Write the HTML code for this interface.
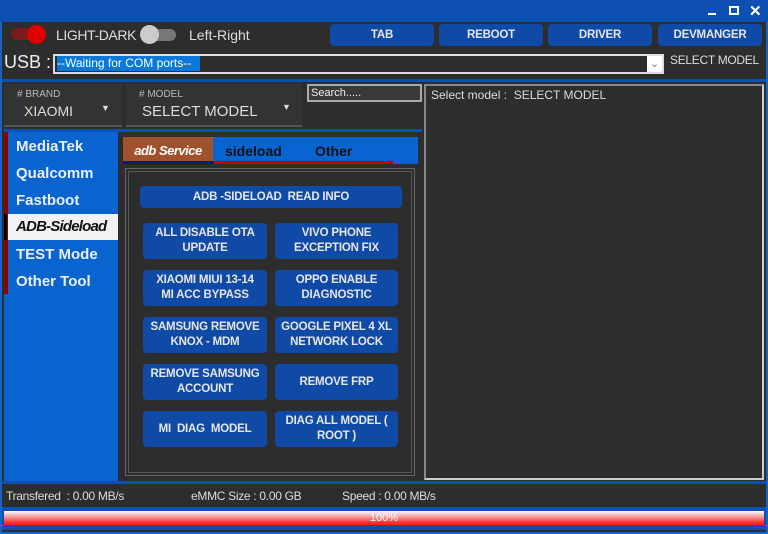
<!DOCTYPE html>
<html><head><style>
*{margin:0;padding:0;box-sizing:border-box}
body{width:768px;height:534px;background:#1565c0;font-family:"Liberation Sans",sans-serif;position:relative;overflow:hidden}
.a{position:absolute}
.dark{background:#2d2d2d}
.btn{position:absolute;background:#0f4aa6;color:#e6e6e6;font-weight:bold;font-size:11.5px;text-align:center;border-radius:4px;display:flex;align-items:center;justify-content:center;line-height:15px;letter-spacing:-0.2px}
.side{position:absolute;left:16px;color:#e8f0ff;font-size:15px;font-weight:bold}
</style></head><body>
<div class="a" style="left:0;top:0;width:768px;height:22px;background:#0d4fb3"></div>
<div class="a" style="left:708px;top:13px;width:8px;height:2px;background:#fff"></div>
<div class="a" style="left:729px;top:6px;width:10px;height:9px;border:2px solid #fff"></div>
<div class="a" style="left:749px;top:2px;color:#fff;font-size:15px;font-weight:bold">✕</div>
<div class="a dark" style="left:2px;top:22px;width:764px;height:510px"></div>
<div class="a" style="left:11px;top:28px;width:34px;height:12px;border-radius:6px;background:#7a1a1a"></div>
<div class="a" style="left:27px;top:25px;width:19px;height:19px;border-radius:50%;background:#e00000"></div>
<div class="a" style="left:56px;top:27px;color:#ddd;font-size:14px;letter-spacing:-0.4px">LIGHT-DARK</div>
<div class="a" style="left:142px;top:29px;width:34px;height:12px;border-radius:6px;background:#777"></div>
<div class="a" style="left:140px;top:25px;width:19px;height:19px;border-radius:50%;background:#ccc"></div>
<div class="a" style="left:189px;top:27px;color:#ddd;font-size:14px">Left-Right</div>
<div class="btn" style="left:330px;top:24px;width:104px;height:22px">TAB</div>
<div class="btn" style="left:439px;top:24px;width:104px;height:22px">REBOOT</div>
<div class="btn" style="left:548px;top:24px;width:104px;height:22px">DRIVER</div>
<div class="btn" style="left:658px;top:24px;width:104px;height:22px">DEVMANGER</div>
<div class="a" style="left:4px;top:52px;color:#eee;font-size:18px">USB :</div>
<div class="a" style="left:53px;top:54px;width:611px;height:20px;border:2px solid #ddd;background:#2d2d2d"></div>
<div class="a" style="left:57px;top:56px;width:143px;height:15px;background:#0a78d7;color:#fff;font-size:12px;line-height:15px">--Waiting for COM ports--</div>
<div class="a" style="left:647px;top:56px;width:15px;height:16px;background:#fff;color:#777;font-size:11px;text-align:center;line-height:16px">⌄</div>
<div class="a" style="left:670px;top:53px;color:#ddd;font-size:12px;letter-spacing:-0.3px">SELECT MODEL</div>
<div class="a" style="left:2px;top:79px;width:420px;height:3px;background:#0d4fb3"></div>
<div class="a" style="left:422px;top:79px;width:344px;height:3px;background:#0d4fb3"></div>
<div class="a" style="left:4px;top:84px;width:118px;height:43px;background:#333;border-bottom:2px solid #555"></div>
<div class="a" style="left:17px;top:89px;color:#bbb;font-size:10px">#&nbsp;BRAND</div>
<div class="a" style="left:24px;top:103px;color:#ddd;font-size:14px">XIAOMI</div>
<div class="a" style="left:101px;top:103px;color:#ddd;font-size:9px">▼</div>
<div class="a" style="left:126px;top:84px;width:176px;height:43px;background:#333;border-bottom:2px solid #555"></div>
<div class="a" style="left:139px;top:89px;color:#bbb;font-size:10px">#&nbsp;MODEL</div>
<div class="a" style="left:142px;top:103px;color:#ddd;font-size:15px">SELECT MODEL</div>
<div class="a" style="left:282px;top:102px;color:#ddd;font-size:9px">▼</div>
<div class="a" style="left:307px;top:84px;width:115px;height:18px;border:2px solid #aaa;background:#3a3a3a;color:#eee;font-size:11px;padding-left:2px;line-height:14px">Search.....</div>
<div class="a" style="left:4px;top:129px;width:418px;height:3px;background:#0d4fb3"></div>
<div class="a" style="left:424px;top:84px;width:340px;height:396px;border:2px solid #ccc;border-left-color:#888;border-top-color:#888;background:#2d2d2d"></div>
<div class="a" style="left:431px;top:88px;color:#ddd;font-size:12px">Select model :&nbsp; SELECT MODEL</div>
<div class="a" style="left:4px;top:132px;width:114px;height:350px;background:#0a64d0"></div>
<div class="a" style="left:4px;top:132px;width:4px;height:162px;background:#8b0000"></div>
<div class="a" style="left:4px;top:214px;width:3px;height:26px;background:#000"></div>
<div class="a" style="left:8px;top:214px;width:110px;height:26px;background:#f2f2f2"></div>
<div class="side" style="top:138px">MediaTek</div>
<div class="side" style="top:165px">Qualcomm</div>
<div class="side" style="top:192px">Fastboot</div>
<div class="side" style="top:218px;color:#111;font-style:italic;font-weight:900;font-size:15px;letter-spacing:-0.8px">ADB-Sideload</div>
<div class="side" style="top:246px">TEST Mode</div>
<div class="side" style="top:273px">Other Tool</div>
<div class="a" style="left:118px;top:132px;width:302px;height:350px;background:#2d2d2d"></div>
<div class="a" style="left:123px;top:137px;width:295px;height:27px;background:#0a64d0"></div>
<div class="a" style="left:123px;top:137px;width:90px;height:25px;background:#a0522d;color:#fff;font-style:italic;font-weight:bold;font-size:13px;text-align:center;line-height:27px;letter-spacing:-0.5px">adb Service</div>
<div class="a" style="left:123px;top:161px;width:90px;height:3px;background:#00157a"></div>
<div class="a" style="left:213px;top:161px;width:180px;height:3px;background:#c00000"></div>
<div class="a" style="left:225px;top:143px;color:#111;font-weight:bold;font-size:14px">sideload</div>
<div class="a" style="left:315px;top:143px;color:#111;font-weight:bold;font-size:14px">Other</div>
<div class="a" style="left:125px;top:168px;width:290px;height:308px;border:1px solid #666;box-shadow:inset 0 0 0 2px #2d2d2d,inset 0 0 0 3px #555"></div>
<div class="btn" style="left:140px;top:186px;width:262px;height:22px">ADB -SIDELOAD&nbsp; READ INFO</div>
<div class="btn" style="left:143px;top:223px;width:124px;height:36px">ALL DISABLE OTA<br>UPDATE</div>
<div class="btn" style="left:275px;top:223px;width:123px;height:36px">VIVO PHONE<br>EXCEPTION FIX</div>
<div class="btn" style="left:143px;top:270px;width:124px;height:36px">XIAOMI MIUI 13-14<br>MI ACC BYPASS</div>
<div class="btn" style="left:275px;top:270px;width:123px;height:36px">OPPO ENABLE<br>DIAGNOSTIC</div>
<div class="btn" style="left:143px;top:317px;width:124px;height:36px">SAMSUNG REMOVE<br>KNOX - MDM</div>
<div class="btn" style="left:275px;top:317px;width:123px;height:36px">GOOGLE PIXEL 4 XL<br>NETWORK LOCK</div>
<div class="btn" style="left:143px;top:364px;width:124px;height:36px">REMOVE SAMSUNG<br>ACCOUNT</div>
<div class="btn" style="left:275px;top:364px;width:123px;height:36px">REMOVE FRP</div>
<div class="btn" style="left:143px;top:411px;width:124px;height:36px">MI&nbsp; DIAG&nbsp; MODEL</div>
<div class="btn" style="left:275px;top:411px;width:123px;height:36px">DIAG ALL MODEL (<br>ROOT )</div>
<div class="a" style="left:2px;top:481px;width:764px;height:3px;background:#0d4fb3"></div>
<div class="a" style="left:6px;top:489px;color:#ddd;font-size:12px;letter-spacing:-0.3px">Transfered&nbsp; : 0.00 MB/s</div>
<div class="a" style="left:191px;top:489px;color:#ddd;font-size:12px;letter-spacing:-0.3px">eMMC Size : 0.00 GB</div>
<div class="a" style="left:342px;top:489px;color:#ddd;font-size:12px;letter-spacing:-0.3px">Speed : 0.00 MB/s</div>
<div class="a" style="left:2px;top:507px;width:764px;height:23px;background:#0d4fb3"></div>
<div class="a" style="left:4px;top:511px;width:760px;height:14px;background:linear-gradient(#fff,#f4a0a0 40%,#ff2020 90%);color:#fff;font-size:11px;text-align:center;line-height:14px">100%</div>
</body></html>
